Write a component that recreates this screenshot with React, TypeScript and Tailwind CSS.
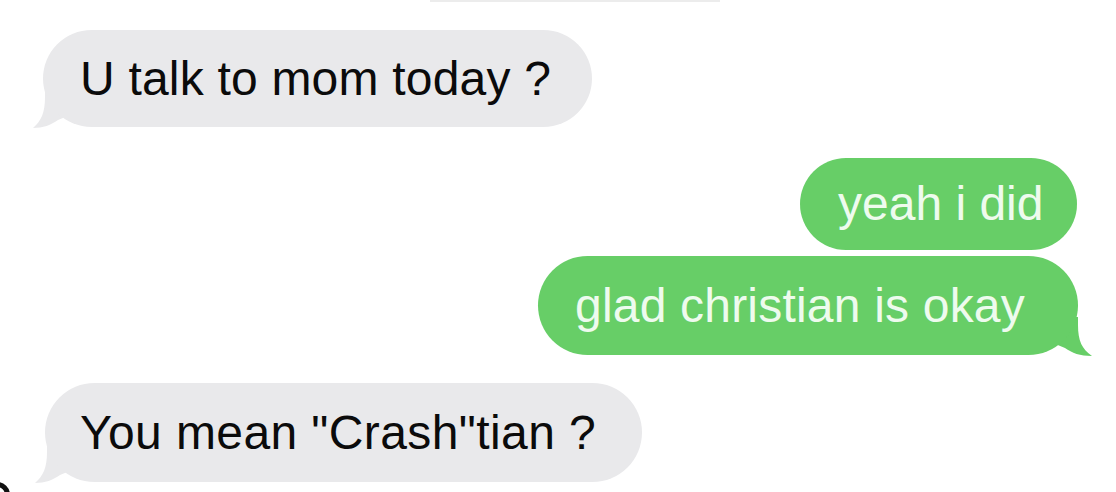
import React from "react";

function GreyTail() {
  return (
    <svg
      className="absolute left-[-12px] bottom-[-2px]"
      width="44"
      height="40"
      viewBox="0 0 44 40"
    >
      <path
        d="M14 0 L14 8 C14 24 10 32 2 39 C12 39 20 36 27 31 L44 24 L44 0 Z"
        fill="#e9e9eb"
      />
    </svg>
  );
}

function GreenTail() {
  return (
    <svg
      className="absolute right-[-14px] bottom-[-2px]"
      width="44"
      height="40"
      viewBox="0 0 44 40"
    >
      <path
        d="M30 0 L30 8 C30 24 34 32 44 39 C32 39 24 36 17 31 L0 24 L0 0 Z"
        fill="#67ce67"
      />
    </svg>
  );
}

export default function App() {
  const font = { fontFamily: '"Liberation Sans", Arial, Helvetica, sans-serif' };
  return (
    <div
      className="relative w-[1116px] h-[492px] overflow-hidden bg-white flex flex-col pt-[30px]"
      style={font}
    >
      <div className="absolute top-0 left-[430px] w-[290px] h-[2px] bg-[#ececec]" />

      <div className="relative self-start ml-[43px] w-[549px] h-[97px]">
        <GreyTail />
        <div className="relative h-full w-full rounded-full bg-[#e9e9eb] flex items-center pl-[37px] text-[48px] leading-none text-[#0b0b0b] tracking-[0.2px]">
          U talk to mom today ?
        </div>
      </div>

      <div className="relative self-end mr-[39px] mt-[31px] w-[277px] h-[92px]">
        <div className="h-full w-full rounded-full bg-[#67ce67] flex items-center pl-[38px] text-[48px] leading-none text-[#eefbee]">
          yeah i did
        </div>
      </div>

      <div className="relative self-end mr-[38px] mt-[6px] w-[540px] h-[99px]">
        <GreenTail />
        <div className="relative h-full w-full rounded-full bg-[#67ce67] flex items-center pl-[37px] text-[48px] leading-none text-[#eefbee] tracking-[0.2px]">
          glad christian is okay
        </div>
      </div>

      <div className="relative self-start ml-[45px] mt-[28px] w-[597px] h-[99px]">
        <GreyTail />
        <div className="relative h-full w-full rounded-full bg-[#e9e9eb] flex items-center pl-[35px] text-[48px] leading-none text-[#0b0b0b] tracking-[0.4px]">
          You mean "Crash"tian ?
        </div>
      </div>

      <div className="absolute left-[-16px] bottom-[-16px] w-[26px] h-[26px] rounded-full border-[5px] border-[#111]" />
    </div>
  );
}
